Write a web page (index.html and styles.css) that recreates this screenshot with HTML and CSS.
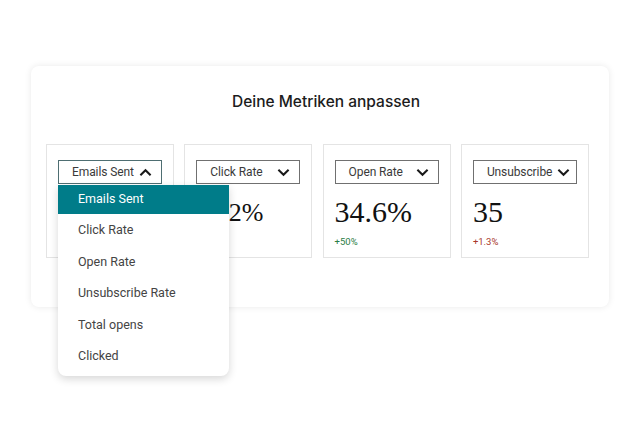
FILE: index.html
```html
<!DOCTYPE html>
<html lang="de">
<head>
    <meta charset="UTF-8">
    <meta name="viewport" content="width=device-width, initial-scale=1.0">
    <title>Deine Metriken anpassen</title>
    <link rel="stylesheet" href="styles.css">
</head>
<body>

<div class="page">
    <div class="panel">
        <h1>Deine Metriken anpassen</h1>

        <div class="metrics">
            <!-- Card with open dropdown, value sits under the menu -->
            <div class="metric">
                <div class="select-wrap">
                    <div class="select open">
                        <span>Emails Sent</span>
                        <svg class="chevron" viewBox="0 0 14 9"><path d="M1.5 7.5 L7 2 L12.5 7.5"/></svg>
                    </div>
                    <ul class="menu">
                        <li class="active">Emails Sent</li>
                        <li>Click Rate</li>
                        <li>Open Rate</li>
                        <li>Unsubscribe Rate</li>
                        <li>Total opens</li>
                        <li>Clicked</li>
                    </ul>
                </div>
            </div>

            <div class="metric">
                <div class="select">
                    <span>Click Rate</span>
                    <svg class="chevron" viewBox="0 0 14 9"><path d="M1.5 1.5 L7 7 L12.5 1.5"/></svg>
                </div>
                <div class="value small">12.2%</div>
            </div>

            <div class="metric">
                <div class="select">
                    <span>Open Rate</span>
                    <svg class="chevron" viewBox="0 0 14 9"><path d="M1.5 1.5 L7 7 L12.5 1.5"/></svg>
                </div>
                <div class="value">34.6%</div>
                <div class="change up">+50%</div>
            </div>

            <div class="metric">
                <div class="select tight">
                    <span>Unsubscribe</span>
                    <svg class="chevron" viewBox="0 0 14 9"><path d="M1.5 1.5 L7 7 L12.5 1.5"/></svg>
                </div>
                <div class="value">35</div>
                <div class="change down">+1.3%</div>
            </div>
        </div>
    </div>
</div>

</body>
</html>
```

FILE: styles.css
```css
body {
    margin: 0;
    background-color: #FFF;
    font-family: Roboto, "Noto Sans", sans-serif;
    color: #222;
}
.page {
    height: 443px;
    box-sizing: border-box;
    padding: 66px 31px 0 31px;
}
.panel {
    width: 578px;
    height: 241px;
    box-sizing: border-box;
    padding: 26px 0 0 15px;
    background-color: #FFF;
    border-radius: 8px;
    box-shadow: 0 0 7px rgba(0, 0, 0, 0.09);
}
h1 {
    margin: 0 0 32px 0;
    padding-right: 3px;
    text-align: center;
    font-family: Inter, sans-serif;
    font-size: 15.5px;
    font-weight: 500;
    line-height: 20px;
    color: #1c1c1c;
}
.metrics {
    display: grid;
    grid-template-columns: repeat(4, 128px);
    column-gap: 10.3px;
}
.metric {
    height: 114px;
    box-sizing: border-box;
    padding: 15px 11px 0 11px;
    border: 1px solid #E4E4E4;
}
.select-wrap {
    position: relative;
}
.select {
    display: flex;
    align-items: center;
    justify-content: space-between;
    height: 24px;
    box-sizing: border-box;
    padding: 0 9px 0 13px;
    border: 1px solid #707070;
    font-size: 12px;
    letter-spacing: -0.1px;
    color: #3a3a3a;
    white-space: nowrap;
}
.select.open {
    border-color: #4E6E72;
}
.select.tight {
    justify-content: flex-start;
    gap: 5px;
}
.chevron {
    flex-shrink: 0;
    width: 13px;
    height: 9px;
    fill: none;
    stroke: #1a1a1a;
    stroke-width: 2.2;
}
.menu {
    position: absolute;
    top: 25px;
    left: 0;
    z-index: 2;
    width: 171px;
    margin: 0;
    padding: 0 0 4px 0;
    list-style: none;
    background-color: #FFF;
    border-radius: 0 0 8px 8px;
    box-shadow: 0 3px 8px rgba(0, 0, 0, 0.16);
}
.menu li {
    height: 31.6px;
    line-height: 31.6px;
    padding-left: 20px;
    font-size: 12.5px;
    color: #444;
}
.menu li.active {
    height: 29px;
    line-height: 28px;
    background-color: #007C89;
    color: #FFF;
}
.value {
    margin-top: 12px;
    font-family: "Liberation Serif", serif;
    font-size: 30px;
    line-height: 32px;
    color: #111;
}
.value.small {
    font-size: 26px;
    line-height: 34px;
}
.change {
    margin-top: 8px;
    font-size: 9.5px;
}
.up {
    color: #2A7D46;
}
.down {
    color: #A8382C;
}
```
